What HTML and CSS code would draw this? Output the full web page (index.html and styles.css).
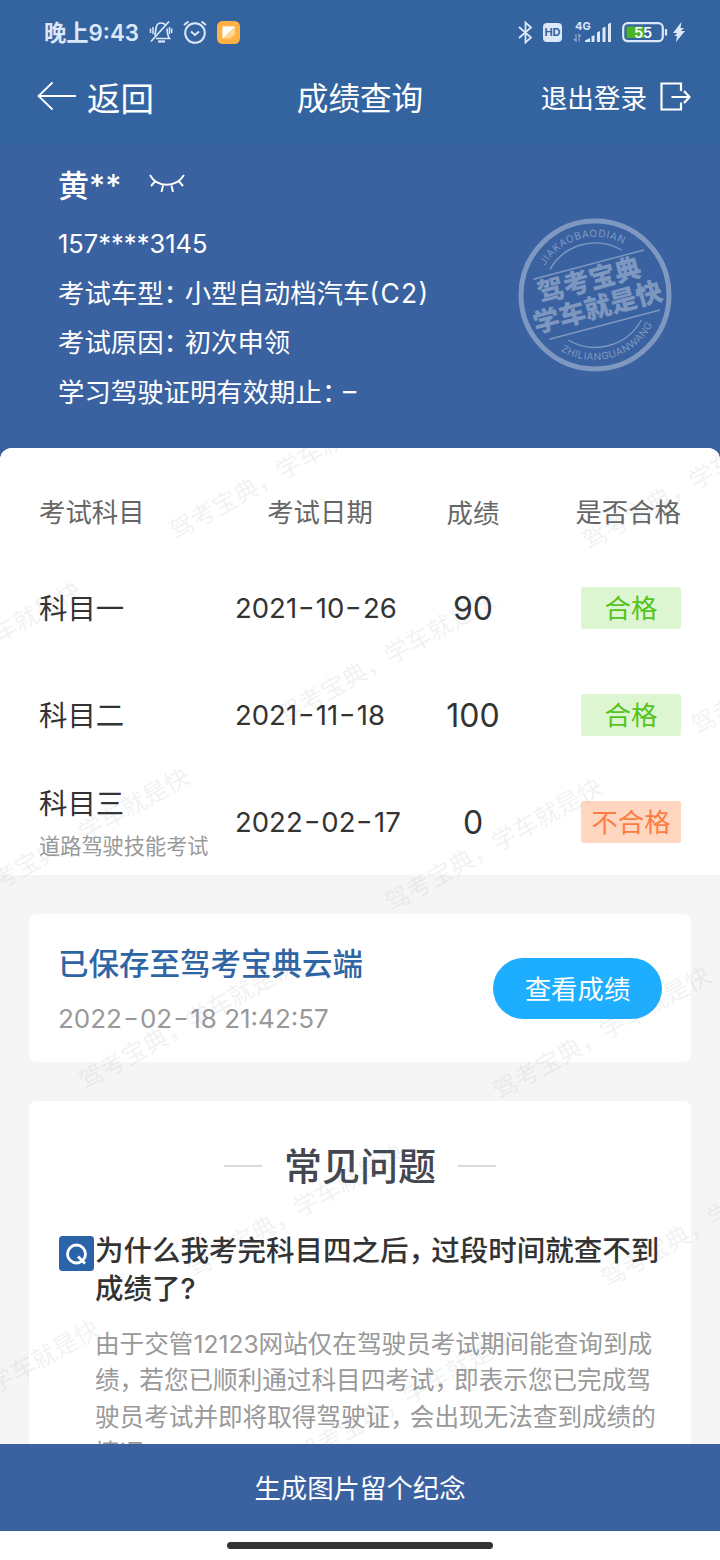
FILE: index.html
```html
<!DOCTYPE html>
<html lang="zh-CN">
<head>
    <meta charset="UTF-8">
    <meta name="viewport" content="width=device-width, initial-scale=1.0">
    <title>成绩查询</title>
    <link rel="stylesheet" href="styles.css">
</head>
<body>

    <header class="header">
        <div class="status-bar">
            <div class="status-left">
                <span class="clock">晚上9:43</span>
                <svg class="icon-mute" width="24" height="24" viewBox="0 0 24 24" fill="none" stroke="#dce7f8" stroke-width="1.7">
                    <path d="M5.500 15.500C7 14 6.500 10 7 8C7.500 5 9.500 3 12 3C14 3 15.500 3.600 16.500 5M18 8.500C18.300 13 18.500 16 20.500 18.500H7M20 1.500L2 21.500"/>
                    <path d="M9 21.500H16" stroke-width="2.200"/>
                    <path d="M1.500 8.500V13M4 7V14M20.500 7V14M22.700 8.500V13" stroke-width="1.500"/>
                </svg>
                <svg class="icon-alarm" width="24" height="24" viewBox="0 0 24 24" fill="none" stroke="#dce7f8" stroke-width="2">
                    <circle cx="12" cy="13" r="9.800"/>
                    <path d="M8 11.500L12 15L16 11.500M1 5L5.500 1.500M18.500 1.500L23 5"/>
                </svg>
                <svg class="icon-app" width="23" height="23" viewBox="0 0 23 23">
                    <rect width="23" height="23" rx="5.500" fill="#ffb141"/>
                    <path d="M5.500 5.500H18V13L13.500 17.500H5.500Z" fill="#ffd692"/>
                    <path d="M5.500 5.500H18L5.500 17.500Z" fill="#fff"/>
                </svg>
            </div>
            <div class="status-right">
                <svg width="15" height="23" viewBox="0 0 15 23" fill="none" stroke="#dce7f8" stroke-width="1.800">
                    <path d="M1 6L13 16.500L7.500 21.500V1.500L13 6.500L1 17"/>
                </svg>
                <span class="hd">HD</span>
                <svg class="icon-signal" width="39" height="23" viewBox="0 0 39 23" fill="#dce7f8">
                    <text x="2" y="9" class="net">4G</text>
                    <path d="M12 19.500L17 17V21H12ZM18.500 15.500L21.500 14V21H18.500ZM24 11.500L27 10V21H24ZM29.500 7L32.500 5.500V21H29.500ZM35 3L38 1.500V21H35Z"/>
                    <path d="M3 13V20L1 18M6 20.500V13.500L8 15.500" fill="none" stroke="#8fabd2" stroke-width="1.200"/>
                </svg>
                <svg class="icon-battery" width="46" height="21" viewBox="0 0 46 21">
                    <rect x="1.200" y="1.200" width="39.600" height="18" rx="4.500" fill="none" stroke="#dce7f8" stroke-width="2.200"/>
                    <rect x="4.500" y="4.500" width="18" height="11.500" rx="1" fill="#4cb227"/>
                    <path d="M44 7V13.500" stroke="#dce7f8" stroke-width="2.200"/>
                    <text x="21" y="15.700" class="level">55</text>
                </svg>
                <svg width="12" height="20" viewBox="0 0 12 20" fill="#dce7f8">
                    <path d="M8.500 0L0 11H4.200L1.500 14H4L3 20L12 9H7.800L11 6H7.500Z"/>
                </svg>
            </div>
        </div>

        <nav class="nav">
            <a class="back">
                <svg width="40" height="30" viewBox="0 0 40 30" fill="none" stroke="#fff" stroke-width="1.800">
                    <path d="M15.500 1.500L1.500 15L15.500 28.500M1.500 15H39"/>
                </svg>
                返回
            </a>
            <h1>成绩查询</h1>
            <a class="logout">
                退出登录
                <svg width="31" height="29" viewBox="0 0 31 29" fill="none" stroke="#fff" stroke-width="2.200">
                    <path d="M21 9V1.500H1.500V27.500H21V20.500M11.500 15H29M24 9L29.500 15L24 21"/>
                </svg>
            </a>
        </nav>
    </header>

    <section class="profile">
        <div class="profile-info">
            <div class="name">
                <span>黄**</span>
                <svg width="36" height="19" viewBox="0 0 36 19" fill="none" stroke="#fff" stroke-width="1.900">
                    <path d="M1 1C8 14 27 14 35 1M6 7.500L2 12M14 11.500L12.500 18M22.500 11.500L24 18M30 7.500L34 12"/>
                </svg>
            </div>
            <p class="phone">157****3145</p>
            <p>考试车型<span class="punct">：</span>小型自动档汽车<span class="code">(C2)</span></p>
            <p>考试原因<span class="punct">：</span>初次申领</p>
            <p>学习驾驶证明有效期止<span class="punct">：</span>–</p>
        </div>
        <svg class="stamp" width="154" height="154" viewBox="0 0 154 154">
            <defs>
                <path id="arc-top" d="M27 48A58 58 0 0 1 107 27"/>
                <path id="arc-bottom" d="M42.700 132.700A65 65 0 0 0 134.700 106"/>
            </defs>
            <circle cx="77" cy="77" r="74" class="ring"/>
            <path class="thin" d="M32 51.300A52.500 52.500 0 0 1 103.700 32M50.300 122A52.500 52.500 0 0 0 123.300 102M15.300 61.300L126 32M31.300 121.300L142 92"/>
            <text class="latin"><textPath href="#arc-top" textLength="90">JIAKAOBAODIAN</textPath></text>
            <text class="latin"><textPath href="#arc-bottom" textLength="107">ZHILIANGUANWANG</textPath></text>
            <text class="slogan" transform="translate(71.300 62) rotate(-14.800)" y="9.500">驾考宝典</text>
            <text class="slogan" transform="translate(79.700 89.300) rotate(-14.800)" y="9.500">学车就是快</text>
        </svg>
    </section>

    <main class="content">
        <section class="scores">
            <div class="row head">
                <span>考试科目</span>
                <span class="date">考试日期</span>
                <span class="score">成绩</span>
                <span class="result">是否合格</span>
            </div>
            <div class="row">
                <span class="subject">科目一</span>
                <span class="date">2021<i>-</i>10<i>-</i>26</span>
                <span class="score">90</span>
                <span class="result"><em class="tag pass">合格</em></span>
            </div>
            <div class="row">
                <span class="subject">科目二</span>
                <span class="date">2021<i>-</i>11<i>-</i>18</span>
                <span class="score">100</span>
                <span class="result"><em class="tag pass">合格</em></span>
            </div>
            <div class="row">
                <span class="subject two-line">科目三<small>道路驾驶技能考试</small></span>
                <span class="date">2022<i>-</i>02<i>-</i>17</span>
                <span class="score">0</span>
                <span class="result"><em class="tag fail">不合格</em></span>
            </div>
        </section>

        <section class="card saved">
            <div class="saved-info">
                <h2>已保存至驾考宝典云端</h2>
                <p>2022<i>-</i>02<i>-</i>18 21:42:57</p>
            </div>
            <button class="btn" type="button">查看成绩</button>
        </section>

        <section class="card faq">
            <h2 class="faq-title">常见问题</h2>
            <div class="qa">
                <svg class="q-icon" width="35" height="35" viewBox="0 0 35 35">
                    <rect width="35" height="35" rx="3.500" fill="#2b63a8"/>
                    <circle cx="17.500" cy="18" r="9" fill="none" stroke="#fff" stroke-width="2.800"/>
                    <path d="M19 20.500L26 27.500" stroke="#fff" stroke-width="2.800"/>
                </svg>
                <div>
                    <h3>为什么我考完科目四之后<span class="punct">，</span>过段时间就查不到<br>成绩了?</h3>
                    <p>由于交管12123网站仅在驾驶员考试期间能查询到成<br>绩<span class="punct">，</span>若您已顺利通过科目四考试<span class="punct">，</span>即表示您已完成驾<br>驶员考试并即将取得驾驶证<span class="punct">，</span>会出现无法查到成绩的<br>情况</p>
                </div>
            </div>
        </section>

        <svg class="watermark" width="720" height="996" viewBox="0 448 720 996">
            <text transform="translate(175.500 540.500) rotate(-29.300)">驾考宝典，学车就是快</text>
            <text transform="translate(588.500 550.500) rotate(-29.300)">驾考宝典，学车就是快</text>
            <text transform="translate(-130 716) rotate(-29.300)">驾考宝典，学车就是快</text>
            <text transform="translate(284 725) rotate(-29.300)">驾考宝典，学车就是快</text>
            <text transform="translate(697 735.500) rotate(-29.300)">驾考宝典，学车就是快</text>
            <text transform="translate(-22 902) rotate(-29.300)">驾考宝典，学车就是快</text>
            <text transform="translate(391 912) rotate(-29.300)">驾考宝典，学车就是快</text>
            <text transform="translate(85 1090.500) rotate(-29.300)">驾考宝典，学车就是快</text>
            <text transform="translate(499 1100.500) rotate(-29.300)">驾考宝典，学车就是快</text>
            <text transform="translate(193 1278) rotate(-29.300)">驾考宝典，学车就是快</text>
            <text transform="translate(607 1288) rotate(-29.300)">驾考宝典，学车就是快</text>
            <text transform="translate(-112 1454) rotate(-29.300)">驾考宝典，学车就是快</text>
            <text transform="translate(302 1465) rotate(-29.300)">驾考宝典，学车就是快</text>
        </svg>
    </main>

    <footer class="footer">
        <button class="save-btn" type="button">生成图片留个纪念</button>
        <div class="home-bar"></div>
    </footer>

</body>
</html>
```
FILE: styles.css
```css
:root {
    --nav: #3464a0;
    --primary: #3b62a0;
    --link: #2f65a5;
    --status: #dce7f8;
    --text: #333;
    --muted: #999;
}

* {
    margin: 0;
    padding: 0;
    box-sizing: border-box;
}

body {
    width: 720px;
    height: 1560px;
    overflow: hidden;
    display: flex;
    flex-direction: column;
    background-color: var(--primary);
    color: var(--text);
    font-family: 'Inter', 'Noto Sans CJK SC', sans-serif;
    font-feature-settings: "case";
    font-size: 26.4px;
    white-space: nowrap;
}

button {
    border: none;
    padding-bottom: 2px;
    font: inherit;
    color: white;
}

.punct {
    font-feature-settings: "halt";
    margin-right: 0.3em;
}

/* wide dash inside dates */
.date i,
.saved i {
    display: inline-block;
    margin: 0 3px;
    font-style: normal;
    transform: scaleX(1.3);
}

/* Header */
.header {
    height: 144px;
    background-color: var(--nav);
    color: white;
}

.status-bar {
    height: 64px;
    padding: 0 35px 0 44px;
    display: flex;
    justify-content: space-between;
    align-items: center;
}

.status-left,
.status-right {
    display: flex;
    align-items: center;
}

.clock {
    color: var(--status);
    font-size: 22.3px;
    font-weight: 600;
    width: 105px;
    padding-bottom: 2px;
}

.icon-alarm {
    margin-left: 10px;
}

.icon-app {
    margin-left: 10px;
}

.hd {
    width: 19px;
    height: 19px;
    margin: 0 11px 0 10px;
    border-radius: 4px;
    background-color: var(--status);
    color: var(--nav);
    font-size: 11px;
    font-weight: 700;
    line-height: 19px;
    text-align: center;
}

.net {
    font-size: 11px;
    font-weight: 700;
}

.icon-battery {
    margin: 0 5px 0 10px;
}

.level {
    fill: white;
    font-size: 14.5px;
    font-weight: 600;
    text-anchor: middle;
}

.nav {
    height: 64px;
    padding: 0 29px 0 37px;
    display: grid;
    grid-template-columns: 1fr auto 1fr;
    align-items: center;
}

.nav h1 {
    font-size: 31.6px;
    font-weight: 400;
    margin-left: -8px;
}

.back,
.logout {
    display: flex;
    align-items: center;
}

.back {
    gap: 10px;
    font-size: 33.5px;
}

.logout {
    gap: 13px;
    justify-content: flex-end;
    font-size: 26.6px;
}

/* Profile */
.profile {
    height: 304px;
    padding: 0 48px 0 58px;
    display: flex;
    justify-content: space-between;
    color: white;
}

.profile-info {
    padding-top: 15px;
}

.profile-info p {
    height: 49.5px;
    line-height: 49.5px;
}

.name {
    height: 48px;
    margin-bottom: 12px;
    display: flex;
    align-items: center;
    gap: 28px;
    font-size: 31px;
    font-weight: 500;
}

.name,
.profile-info .phone {
    font-feature-settings: normal;
}

.phone {
    font-size: 25.5px;
}

.code {
    letter-spacing: 1.4px;
}

.stamp {
    margin-top: 74px;
    fill: rgba(255, 255, 255, 0.35);
}

.ring,
.thin {
    fill: none;
    stroke: rgba(255, 255, 255, 0.35);
    stroke-width: 5;
}

.thin {
    stroke-width: 1.4;
}

.latin {
    font-size: 10px;
}

.slogan {
    font-size: 26.5px;
    font-weight: 900;
    text-anchor: middle;
}

/* Content */
.content {
    position: relative;
    height: 996px;
    overflow: hidden;
    border-radius: 12px 12px 0 0;
    background-color: #f5f5f5;
}

.scores {
    height: 427px;
    padding: 20px 39px 0;
    background-color: white;
}

.row {
    height: 107px;
    display: grid;
    grid-template-columns: 196px 170px 136px 140px;
    align-items: center;
}

.row.head {
    height: 86px;
    padding-bottom: 2px;
    color: #666;
}

.head .date {
    text-align: center;
    font-size: inherit;
}

.row.head .score {
    font-size: inherit;
}

.subject {
    font-size: 28.4px;
    padding-bottom: 2px;
}

.two-line {
    line-height: 43px;
    padding: 8px 0 1px;
}

.two-line small {
    display: block;
    font-size: 21.2px;
    color: var(--muted);
}

.date {
    font-size: 27.5px;
}

.score {
    font-size: 32px;
    text-align: center;
    padding-top: 2px;
}

.result {
    text-align: right;
}

.tag {
    display: inline-block;
    width: 100px;
    height: 42px;
    border-radius: 3px;
    font-style: normal;
    line-height: 42px;
    text-align: center;
}

.pass {
    background-color: #def5d1;
    color: #52c41a;
}

.fail {
    background-color: #ffd6bf;
    color: #fa7d45;
}

.card {
    margin: 39px 29px 0;
    border-radius: 8px;
    background-color: white;
}

.saved {
    height: 148px;
    padding: 0 29px;
    display: flex;
    justify-content: space-between;
    align-items: center;
}

.saved-info {
    padding-top: 5px;
}

.saved h2 {
    color: var(--link);
    font-size: 30.5px;
    font-weight: 500;
    line-height: 55px;
}

.saved p {
    color: var(--muted);
    font-size: 26px;
    line-height: 55px;
}

.btn {
    width: 169px;
    height: 61px;
    border-radius: 31px;
    background-color: #1eaeff;
}

.faq {
    height: 400px;
    padding: 37px 0 0 30px;
}

.faq-title {
    display: flex;
    justify-content: center;
    align-items: center;
    gap: 22px;
    margin-left: -30px;
    color: #44474f;
    font-size: 38px;
    font-weight: 500;
    line-height: 56px;
}

.faq-title::before,
.faq-title::after {
    content: "";
    width: 38px;
    height: 2px;
    background-color: #d8dade;
}

.qa {
    margin-top: 38px;
    display: flex;
    align-items: flex-start;
}

.q-icon {
    margin: 4px 1px 0 0;
}

.qa h3 {
    font-size: 28.5px;
    font-weight: 500;
    line-height: 38px;
}

.qa p {
    margin-top: 18px;
    color: var(--muted);
    font-size: 24.6px;
    line-height: 36.3px;
}

.watermark {
    position: absolute;
    top: 0;
    left: 0;
    font-size: 24.5px;
    fill: rgba(110, 125, 145, 0.11);
    pointer-events: none;
}

/* Footer */
.footer {
    height: 116px;
    background-color: white;
    display: flex;
    flex-direction: column;
    align-items: center;
}

.save-btn {
    width: 100%;
    height: 87px;
    background-color: var(--primary);
}

.home-bar {
    width: 266px;
    height: 7px;
    margin-top: 11px;
    border-radius: 4px;
    background-color: #333;
}
```
